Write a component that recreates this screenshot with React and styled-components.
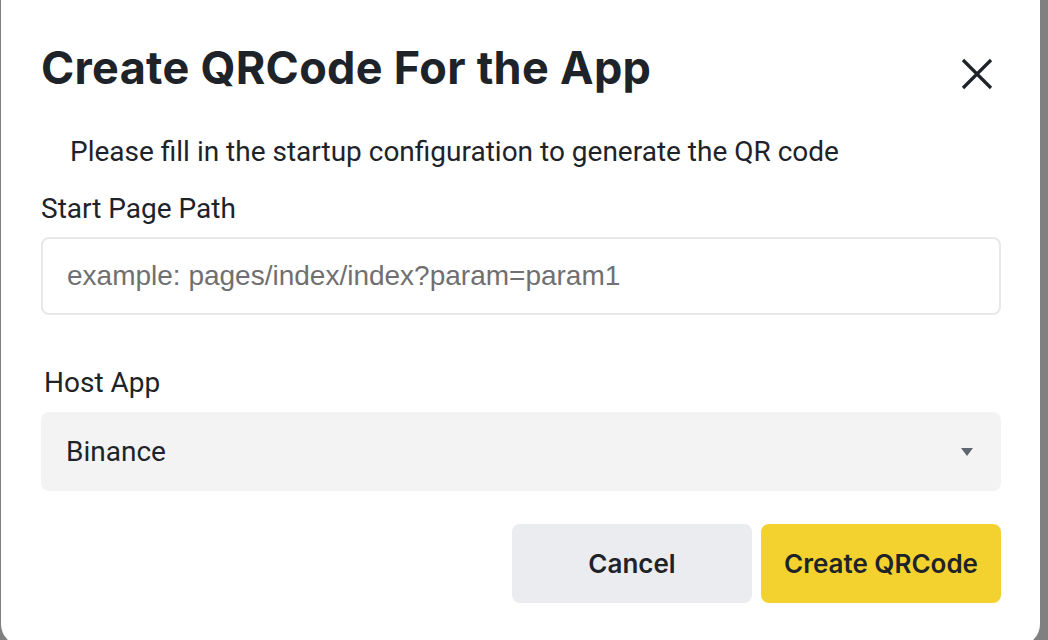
import React from 'react';
import styled, { createGlobalStyle } from 'styled-components';

const text = '#1e2329';

const GlobalStyle = createGlobalStyle`
  html, body {
    margin: 0;
    padding: 0;
    height: 100%;
    overflow: hidden;
    background: #808080;
  }
  * { box-sizing: border-box; }
`;

const Backdrop = styled.div`
  width: 1048px;
  height: 640px;
  padding-left: 1px;
  background: #808080;
`;

const Modal = styled.div`
  width: 1039px;
  height: 646px;
  background: #ffffff;
  border-radius: 0 0 22px 22px;
  padding: 40px 40px 0 40px;
  display: flex;
  flex-direction: column;
  font-family: Roboto, "Liberation Sans", sans-serif;
  color: ${text};
`;

const Header = styled.div`
  display: flex;
  align-items: center;
  justify-content: space-between;
  height: 56px;
`;

const Title = styled.h1`
  margin: 0;
  font-family: Inter, "Noto Sans", sans-serif;
  font-size: 45px;
  font-weight: 700;
  line-height: 56px;
  letter-spacing: 0.3px;
`;

const CloseButton = styled.button`
  width: 40px;
  height: 40px;
  margin-right: 3px;
  margin-top: 12px;
  border: none;
  background: none;
  padding: 0;
  display: flex;
  align-items: center;
  justify-content: center;
  cursor: pointer;
`;

const Subtitle = styled.p`
  margin: 40px 0 0 29px;
  font-size: 28px;
  line-height: 32px;
`;

const Label = styled.label`
  display: block;
  margin: ${p => p.$top}px 0 0 ${p => p.$left || 0}px;
  font-size: 28px;
  line-height: 32px;
`;

const Input = styled.input`
  display: block;
  width: 960px;
  height: 78px;
  margin-top: 12px;
  border: 2px solid #e6e8ea;
  border-radius: 8px;
  padding: 0 24px;
  font-family: "Liberation Sans", Arial, sans-serif;
  font-size: 28px;
  color: ${text};
  outline: none;
  &::placeholder { color: #707070; }
`;

const Select = styled.div`
  width: 960px;
  height: 79px;
  margin-top: 13px;
  background: #f3f3f3;
  border-radius: 8px;
  padding: 0 28px 0 25px;
  display: flex;
  align-items: center;
  justify-content: space-between;
  font-size: 28px;
`;

const Caret = styled.span`
  width: 0;
  height: 0;
  border-left: 6px solid transparent;
  border-right: 6px solid transparent;
  border-top: 8px solid #5e6673;
`;

const Footer = styled.div`
  display: flex;
  justify-content: flex-end;
  gap: 9px;
  margin-top: 33px;
  width: 960px;
`;

const Button = styled.button`
  width: 240px;
  height: 79px;
  border: none;
  border-radius: 8px;
  background: ${p => (p.$primary ? '#f3d22f' : '#eaecef')};
  color: ${text};
  font-family: Inter, "Noto Sans", sans-serif;
  font-size: 26px;
  font-weight: 600;
  cursor: pointer;
`;

export default function App() {
  return (
    <>
      <GlobalStyle />
      <Backdrop>
        <Modal>
          <Header>
            <Title>Create QRCode For the App</Title>
            <CloseButton aria-label="close">
              <svg width="32" height="32" viewBox="0 0 32 32">
                <path d="M2 2L30 30M30 2L2 30" stroke={text} strokeWidth="3.2" strokeLinecap="butt" />
              </svg>
            </CloseButton>
          </Header>
          <Subtitle>Please fill in the startup configuration to generate the QR code</Subtitle>
          <Label $top={25}>Start Page Path</Label>
          <Input placeholder="example: pages/index/index?param=param1" />
          <Label $top={52} $left={3}>Host App</Label>
          <Select>
            <span>Binance</span>
            <Caret />
          </Select>
          <Footer>
            <Button>Cancel</Button>
            <Button $primary>Create QRCode</Button>
          </Footer>
        </Modal>
      </Backdrop>
    </>
  );
}
